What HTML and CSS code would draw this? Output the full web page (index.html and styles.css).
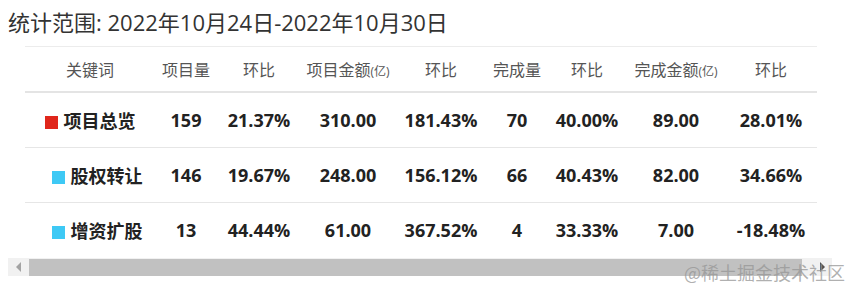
FILE: index.html
```html
<!DOCTYPE html>
<html lang="zh">
<head>
    <meta charset="UTF-8">
    <title>统计范围</title>
    <link rel="stylesheet" href="styles.css">
</head>
<body>
    <h2 class="title">统计范围: 2022年10月24日-2022年10月30日</h2>

    <div class="scroll-box">
        <table class="stat-table">
            <colgroup>
                <col style="width:130px"><col style="width:62px"><col style="width:84px">
                <col style="width:94px"><col style="width:92px"><col style="width:60px">
                <col style="width:80px"><col style="width:98px"><col style="width:92px">
            </colgroup>
            <thead>
                <tr>
                    <th>关键词</th>
                    <th>项目量</th>
                    <th>环比</th>
                    <th>项目金额<small>(亿)</small></th>
                    <th>环比</th>
                    <th>完成量</th>
                    <th>环比</th>
                    <th>完成金额<small>(亿)</small></th>
                    <th>环比</th>
                </tr>
            </thead>
            <tbody>
                <tr>
                    <td><span class="dot red"></span>项目总览</td>
                    <td>159</td><td>21.37%</td><td>310.00</td><td>181.43%</td>
                    <td>70</td><td>40.00%</td><td>89.00</td><td>28.01%</td>
                </tr>
                <tr>
                    <td class="sub"><span class="dot blue"></span>股权转让</td>
                    <td>146</td><td>19.67%</td><td>248.00</td><td>156.12%</td>
                    <td>66</td><td>40.43%</td><td>82.00</td><td>34.66%</td>
                </tr>
                <tr>
                    <td class="sub"><span class="dot blue"></span>增资扩股</td>
                    <td>13</td><td>44.44%</td><td>61.00</td><td>367.52%</td>
                    <td>4</td><td>33.33%</td><td>7.00</td><td>-18.48%</td>
                </tr>
            </tbody>
        </table>

        <!-- 横向滚动条 -->
        <div class="scrollbar">
            <span class="arrow left"></span>
            <div class="thumb"></div>
            <span class="arrow right"></span>
        </div>
    </div>

    <div class="watermark">@稀土掘金技术社区</div>
</body>
</html>
```

FILE: styles.css
```css
body {
    margin: 0;
    padding: 0 8px;
    font-family: "Open Sans", "Noto Sans CJK SC", sans-serif;
    background-color: #fff;
    color: #222;
}
.title {
    margin: 7px 0 9px;
    font-size: 22px;
    line-height: 30px;
    font-weight: normal;
    color: #333;
    white-space: nowrap;
}
.scroll-box {
    width: 824px;
}
.stat-table {
    width: 792px;
    margin-left: 17px;
    border-collapse: collapse;
    table-layout: fixed;
    border-top: 1px solid #ececec;
}
th {
    height: 44px;
    padding: 0;
    font-size: 16px;
    font-weight: normal;
    color: #555;
    text-align: center;
    white-space: nowrap;
    border-bottom: 2px solid #e4e4e4;
}
th small {
    font-size: 12px;
}
td {
    height: 54px;
    padding: 0;
    font-size: 18px;
    font-weight: bold;
    color: #222;
    text-align: center;
    white-space: nowrap;
    border-bottom: 1px solid #e6e6e6;
}
tbody tr:last-child td {
    border-bottom: none;
}
td.sub {
    padding-left: 14px;
}
.dot {
    display: inline-block;
    width: 13px;
    height: 13px;
    margin-right: 6px;
    vertical-align: -1px;
}
.dot.red {
    background-color: #e0261b;
}
.dot.blue {
    background-color: #3ec9f5;
}
.scrollbar {
    display: flex;
    align-items: center;
    height: 18px;
    margin-top: 1px;
    background-color: #f1f1f1;
}
.thumb {
    flex: 1;
    height: 17px;
    margin: 0 10px 0 1px;
    background-color: #c1c1c1;
}
.arrow {
    width: 20px;
    height: 18px;
    display: flex;
    align-items: center;
    justify-content: center;
}
.arrow.left::before {
    content: "";
    border-top: 5px solid transparent;
    border-bottom: 5px solid transparent;
    border-right: 5px solid #a3a3a3;
}
.arrow.right::before {
    content: "";
    border-top: 5px solid transparent;
    border-bottom: 5px solid transparent;
    border-left: 5px solid #505050;
}
.watermark {
    position: absolute;
    right: 2px;
    top: 260px;
    font-size: 18px;
    line-height: 24px;
    color: rgba(150, 150, 150, 0.75);
    font-family: "Noto Sans CJK SC", sans-serif;
    letter-spacing: 0;
}
```
